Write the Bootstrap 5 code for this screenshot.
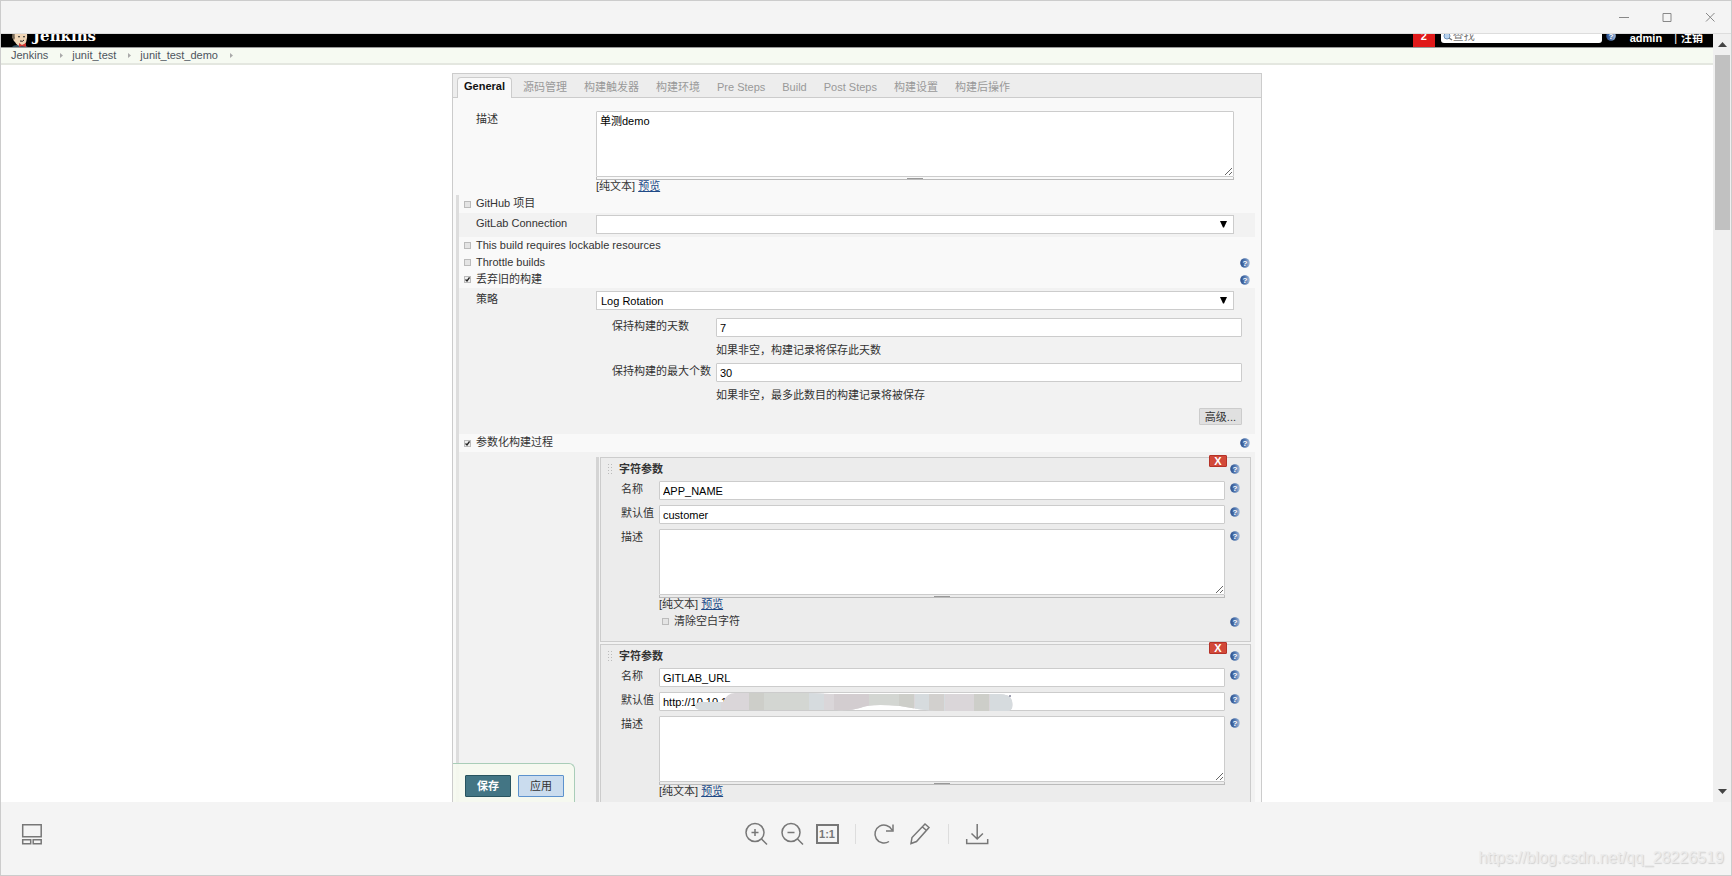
<!DOCTYPE html>
<html lang="zh-CN">
<head>
<meta charset="utf-8">
<meta name="viewport" content="width=device-width, initial-scale=1">
<title>junit_test_demo Config [Jenkins]</title>
<link href="https://cdn.jsdelivr.net/npm/bootstrap@5.3.0/dist/css/bootstrap.min.css" rel="stylesheet">
<style>
  body { font-family: "Liberation Sans", "Noto Sans CJK SC", sans-serif; font-size: 11px; line-height: 16px; color: #333; }
  .viewer { border: 1px solid #ccc; background: #f4f4f4; }
  .title-bar { height: 33px; padding-right: 10px; gap: 21px; border-bottom: 1px solid #ddd; }
  .icon-btn { padding: 0; border: 0; background: none; color: #666; line-height: 0; }
  .title-bar .icon-btn { width: 22px; color: #888; }

  /* Jenkins page header */
  .top-bar { height: 13px; background: #000; color: #fff; }
  .top-row { height: 19px; padding: 0 10px; }
  .logo-text { font: bold 15px/16px "DejaVu Serif", serif; color: #fff; }
  .alert-count { width: 22px; height: 19px; margin-right: 6px; line-height: 16px; background: #e01a1a; font-weight: bold; }
  .search-box { width: 161px; height: 15px; padding: 0 2px 0 12px; border: 0; border-radius: 3px; background: #fff; color: #777; }
  .search-box::placeholder { color: #777; }
  .top-row a { color: #fff; }
  .top-row .user { margin-left: 14px; }
  .crumb-bar { height: 18px; padding: 0 0 2px 10px; background: #f6faf2; border-top: 1px solid #999; border-bottom: 2px solid #e4e7e0; }
  .crumb-bar a { color: #4d545d; }
  .crumb-bar svg { margin: 1px 9px 0 12px; }

  /* Configuration panel */
  .config { width: 100%; max-width: 810px; margin-top: 8px; border: 1px solid #ccc; border-bottom: 0; background: #f9f9f9; }
  .tab-strip { height: 24px; padding: 0 4px; background: #ededed; border-bottom: 1px solid #ccc; }
  .tab-strip .nav-link { padding: 0 8px 1px 9px; line-height: 17px; color: #999; }
  .tab-strip .nav-link.active { margin: 0 2px -1px 0; padding: 0 6px 3px; border: 1px solid #ccc; border-bottom: 0; border-radius: 4px 4px 0 0; background: #f9f9f9; color: #111; font-weight: bold; }
  .label-col { flex: 0 0 120px; }
  .intro { padding: 13px 27px 2px 23px; }
  .section-list { margin: 0 6px 0 3px; border-left: 3px solid #ddd; }
  .check-row { height: 17px; padding: 0 5px; }
  .check-row.tall { height: 18px; }
  .check-row label { margin-left: 5px; padding-bottom: 2px; }
  .band { padding: 2px 0 3px 17px; background: #f2f2f2; }
  .band.deep { padding: 3px 0 9px 17px; }
  .band.fill { padding: 5px 4px 0 0; }
  .field-right { margin-right: 21px; }
  .sub-form { margin: 8px 13px 0 136px; }
  .sub-label { flex: 0 0 104px; }
  .hint { padding: 5px 0; }
  .line { width: 100%; height: 19px; padding: 0 3px; border: 1px solid #ccc; border-radius: 1px; background: #fff; color: #000; }
  .line.pick { display: block; padding: 0 4px; border-radius: 0; appearance: none;
    background: #fff url("data:image/svg+xml,%3Csvg xmlns='http://www.w3.org/2000/svg' width='7' height='7'%3E%3Cpath d='M0 0h7L4 6.500h-1z'/%3E%3C/svg%3E") no-repeat right 6px center; }
  .area { display: block; width: 100%; height: 66px; padding: 1px 3px; border: 1px solid #ccc; border-radius: 1px; background: #fff; color: #000; resize: both; }
  .grip-line { height: 3px; border: solid #bbb; border-width: 0 1px 1px; }
  .grip-line::before { content: ""; display: block; width: 16px; height: 2px; margin: 0 auto; border-bottom: 1px solid #999; }
  .note { line-height: 13px; }
  .note a { color: #204a87; }
  .tick { appearance: none; flex: none; width: 7px; height: 7px; margin: 0; border: 1px solid #bbb; background: #e4e4e4; }
  .tick:checked { background: #eee url("data:image/svg+xml,%3Csvg xmlns='http://www.w3.org/2000/svg' viewBox='0 0 5 5'%3E%3Cpath d='M.5 2.500L2 4L4.500.5' fill='none' stroke='%23222' stroke-width='1.300'/%3E%3C/svg%3E") center/5px; }
  .help { flex: none; width: 10px; height: 10px; padding: 0; border: 0; background: none; line-height: 0; }
  .more-btn { height: 17px; padding: 0 5px; border: 1px solid #ccc; border-radius: 1px; background: #e0e0e0; color: #333; line-height: 14px; }

  /* Build parameters */
  .param-list { margin-left: 137px; padding-left: 1px; border-left: 3px solid #d4d4d4; }
  .param { height: 185px; margin-bottom: 2px; padding: 3px 10px 0 6px; border: 1px solid #ccc; background: #ececec; }
  .grip { width: 7px; height: 12px; margin-right: 5px; background: radial-gradient(circle, #bbb 1px, transparent 1px) 0 0/3px 3px; }
  .param-row { gap: 5px; margin-bottom: 5px; padding-left: 14px; }
  .param-row .param-label { flex: 0 0 38px; margin-right: -5px; }
  .param-row .help { margin-top: 2px; }
  .param-row.trim { margin-top: 2px; }
  .param-row .tick { margin-left: 3px; }
  .remove { position: absolute; top: -3px; right: 23px; width: 18px; height: 12px; padding: 0; border: 1px solid #b53228; border-radius: 1px; background: #d24939; color: #fff; font-weight: bold; line-height: 9px; }
  .mosaic { position: absolute; top: -1px; left: 36px; }

  .save-bar { position: absolute; bottom: 0; left: -1px; gap: 7px; padding: 11px 10px 5px 12px; border: 1px solid #a9cdb8; border-bottom: 0; border-radius: 0 6px 0 0; background: rgba(246, 250, 240, .9); }
  .save-bar button { width: 46px; height: 22px; padding: 0; border: 1px solid #28535f; border-radius: 1px; background: #437584; color: #fff; font-weight: bold; line-height: 18px; }
  .save-bar .apply { border-color: #5c92cd; background: #cadcee; color: #333; font-weight: normal; }

  /* Page scroll bar */
  .scroller { width: 18px; padding: 8px 0 7px; background: #f0f0f0; }
  .thumb { width: 15px; height: 175px; margin-top: 7px; background: #c1c1c1; }

  /* Viewer tool bar */
  .tool-bar { display: grid; grid-template-columns: 1fr auto 1fr; height: 73px; padding: 20px 7px 0; }
  .thumbs { margin-left: 11px; }
  .tools { gap: 12px; height: 24px; }
  .rule { width: 1px; height: 20px; margin: 0 4px; background: #ddd; }
  .actual { width: 23px; height: 20px; border: 2px solid #777; font-weight: bold; font-size: 11px; line-height: 16px; color: #777; }
  .watermark { padding-top: 26px; font-size: 16px; line-height: 20px; color: #ebebeb; text-shadow: 1px 1px 1px #d0d0d0; }
</style>
</head>
<body>
<svg class="position-absolute" width="0" height="0">
  <defs>
    <linearGradient id="ball"><stop offset="0" stop-color="#2d4f8c"/><stop offset=".5" stop-color="#5077b0"/><stop offset="1" stop-color="#a4bddc"/></linearGradient>
    <symbol id="q" viewBox="0 0 10 10"><circle cx="5" cy="5" r="4.800" fill="url(#ball)"/><text x="5" y="8" text-anchor="middle" font-family="Liberation Sans" font-size="8" font-weight="bold" fill="#fff">?</text></symbol>
  </defs>
</svg>
<div class="viewer d-flex flex-column vh-100 overflow-hidden">
  <div class="title-bar d-flex align-items-center justify-content-end flex-shrink-0">
    <button class="icon-btn" aria-label="Minimize"><svg width="12" height="12" stroke="currentColor"><path d="M1 6.500h10"/></svg></button>
    <button class="icon-btn" aria-label="Maximize"><svg width="12" height="12" fill="none" stroke="currentColor"><path d="M2 2.500h8v8H2z"/></svg></button>
    <button class="icon-btn" aria-label="Close"><svg width="12" height="12" stroke="currentColor"><path d="M2 2l8.500 8.500M10.500 2L2 10.500"/></svg></button>
  </div>

  <div class="d-flex flex-fill overflow-hidden bg-white">
    <div class="d-flex flex-column flex-fill overflow-hidden">
      <header class="top-bar d-flex flex-column justify-content-end flex-shrink-0 overflow-hidden">
        <div class="top-row d-flex align-items-center flex-shrink-0">
          <svg width="18" height="22" viewBox="0 0 18 22"><path d="M0 22q1-4 6-4h7q4 1 5 4z" fill="#335061"/><path d="M2 10q0-9 8-9 7 1 6 10-1 8-6 8-4 0-6-4-2-1-2-5z" fill="#f0d6b7"/><path d="M1 11Q1 0 9 1L5 4q-2 3-1 7l-1 2z" fill="#776a5a"/><path d="M7 10q1-1 2 0M12 10q1-1 2 0M9 14q3 1 4-1" fill="none" stroke="#222"/><path d="M8 16l3 2 4-2v4l-4-1-3 1z" fill="#d33833"/></svg>
          <a class="logo-text text-decoration-none ms-1 mb-1" href="#">Jenkins</a>
          <a class="alert-count text-center text-decoration-none ms-auto" href="#">2</a>
          <div class="position-relative mb-1">
            <input class="search-box d-block" type="search" placeholder="查找" aria-label="查找">
            <svg class="position-absolute top-0 start-0" width="13" height="14"><circle cx="6" cy="8" r="3" fill="#b8d3ef" stroke="#6c93bd"/><path d="M8 10l3 2" stroke="#777" stroke-width="1.500"/></svg>
          </div>
          <button class="help ms-1 mb-1" aria-label="Help"><svg width="10" height="10"><use href="#q"/></svg></button>
          <a class="user fw-bold text-decoration-none" href="#">admin</a>
          <span class="ms-2 ps-1">|</span>
          <a class="fw-bold text-decoration-none ms-1" href="#">注销</a>
        </div>
      </header>
      <nav class="crumb-bar d-flex align-items-center flex-shrink-0" aria-label="breadcrumb">
        <a class="text-decoration-none" href="#">Jenkins</a><svg width="3" height="5"><path d="M0 0l3 2.500L0 5z" fill="#aaa"/></svg>
        <a class="text-decoration-none" href="#">junit_test</a><svg width="3" height="5"><path d="M0 0l3 2.500L0 5z" fill="#aaa"/></svg>
        <a class="text-decoration-none" href="#">junit_test_demo</a><svg width="3" height="5"><path d="M0 0l3 2.500L0 5z" fill="#aaa"/></svg>
      </nav>

      <main class="config position-relative d-flex flex-column flex-fill mx-auto overflow-hidden">
        <nav class="tab-strip nav flex-nowrap align-items-end flex-shrink-0">
          <a class="nav-link active" href="#">General</a>
          <a class="nav-link" href="#">源码管理</a>
          <a class="nav-link" href="#">构建触发器</a>
          <a class="nav-link" href="#">构建环境</a>
          <a class="nav-link" href="#">Pre Steps</a>
          <a class="nav-link" href="#">Build</a>
          <a class="nav-link" href="#">Post Steps</a>
          <a class="nav-link" href="#">构建设置</a>
          <a class="nav-link" href="#">构建后操作</a>
        </nav>

        <div class="intro d-flex flex-shrink-0">
          <label class="label-col" for="desc">描述</label>
          <div class="flex-fill">
            <textarea class="area" id="desc">单测demo</textarea>
            <div class="grip-line"></div>
            <div class="note">[纯文本] <a href="#">预览</a></div>
          </div>
        </div>

        <div class="section-list d-flex flex-column flex-fill">
          <div class="check-row tall d-flex align-items-center"><input class="tick" type="checkbox" id="c1"><label for="c1">GitHub 项目</label></div>
          <div class="band d-flex">
            <label class="label-col" for="conn">GitLab Connection</label>
            <div class="flex-fill field-right"><select class="line pick" id="conn"><option></option></select></div>
          </div>
          <div class="check-row d-flex align-items-center"><input class="tick" type="checkbox" id="c2"><label for="c2">This build requires lockable resources</label></div>
          <div class="check-row d-flex align-items-center"><input class="tick" type="checkbox" id="c3"><label for="c3">Throttle builds</label><button class="help ms-auto" aria-label="Help"><svg width="10" height="10"><use href="#q"/></svg></button></div>
          <div class="check-row d-flex align-items-center"><input class="tick" type="checkbox" id="c4" checked><label for="c4">丢弃旧的构建</label><button class="help ms-auto" aria-label="Help"><svg width="10" height="10"><use href="#q"/></svg></button></div>
          <div class="band deep">
            <div class="d-flex">
              <label class="label-col" for="strategy">策略</label>
              <div class="flex-fill field-right"><select class="line pick" id="strategy"><option>Log Rotation</option></select></div>
            </div>
            <div class="sub-form">
              <div class="d-flex">
                <label class="sub-label" for="days">保持构建的天数</label>
                <div class="flex-fill"><input class="line d-block" id="days" value="7"><div class="hint">如果非空，构建记录将保存此天数</div></div>
              </div>
              <div class="d-flex">
                <label class="sub-label" for="count">保持构建的最大个数</label>
                <div class="flex-fill"><input class="line d-block" id="count" value="30"><div class="hint">如果非空，最多此数目的构建记录将被保存</div></div>
              </div>
              <div class="text-end lh-1"><button class="more-btn">高级...</button></div>
            </div>
          </div>
          <div class="check-row tall d-flex align-items-center"><input class="tick" type="checkbox" id="c5" checked><label for="c5">参数化构建过程</label><button class="help ms-auto" aria-label="Help"><svg width="10" height="10"><use href="#q"/></svg></button></div>
          <div class="band fill flex-fill">
            <div class="param-list h-100">
              <section class="param position-relative">
                <button class="remove" aria-label="Remove">X</button>
                <div class="d-flex align-items-center mb-1"><span class="grip"></span><b>字符参数</b><button class="help ms-auto" aria-label="Help"><svg width="10" height="10"><use href="#q"/></svg></button></div>
                <div class="param-row d-flex"><label class="param-label" for="n1">名称</label><div class="flex-fill"><input class="line d-block" id="n1" value="APP_NAME"></div><button class="help" aria-label="Help"><svg width="10" height="10"><use href="#q"/></svg></button></div>
                <div class="param-row d-flex"><label class="param-label" for="v1">默认值</label><div class="flex-fill"><input class="line d-block" id="v1" value="customer"></div><button class="help" aria-label="Help"><svg width="10" height="10"><use href="#q"/></svg></button></div>
                <div class="param-row d-flex mb-0"><label class="param-label" for="d1">描述</label>
                  <div class="flex-fill"><textarea class="area" id="d1"></textarea><div class="grip-line"></div><div class="note">[纯文本] <a href="#">预览</a></div></div>
                  <button class="help" aria-label="Help"><svg width="10" height="10"><use href="#q"/></svg></button></div>
                <div class="param-row trim d-flex align-items-center"><span class="param-label"></span><input class="tick" type="checkbox" id="t1"><label for="t1">清除空白字符</label><button class="help ms-auto" aria-label="Help"><svg width="10" height="10"><use href="#q"/></svg></button></div>
              </section>
              <section class="param position-relative">
                <button class="remove" aria-label="Remove">X</button>
                <div class="d-flex align-items-center mb-1"><span class="grip"></span><b>字符参数</b><button class="help ms-auto" aria-label="Help"><svg width="10" height="10"><use href="#q"/></svg></button></div>
                <div class="param-row d-flex"><label class="param-label" for="n2">名称</label><div class="flex-fill"><input class="line d-block" id="n2" value="GITLAB_URL"></div><button class="help" aria-label="Help"><svg width="10" height="10"><use href="#q"/></svg></button></div>
                <div class="param-row d-flex"><label class="param-label" for="v2">默认值</label>
                  <div class="flex-fill position-relative"><input class="line d-block" id="v2" value="http://10.10.1">
                    <svg class="mosaic" width="320" height="21" viewBox="0 0 320 21">
                      <clipPath id="smear"><path d="M0 15q0-4 8-4h20q4-9 12-9h75l20 1h165q16-1 17 7 2 10-5 10H240q-14-1-35-5-30-3-40 2-10 3-24 2H6q-6-1-6-4z"/></clipPath>
                      <g clip-path="url(#smear)"><path fill="#dad6d9" d="M0 0h320v21H0z"/><path fill="#d6dbde" d="M0 0h26v21H0zM114 0h15v21h-15zM220 0h30v21h-30zM295 0h25v21h-25z"/><path fill="#cdcec9" d="M54 0h15v21H54zM204 0h15v21h-15zM279 0h15v21h-15z"/><path fill="#d3d6d2" d="M69 0h45v21H69zM174 0h30v21h-30z"/><path fill="#d3cdd0" d="M139 0h35v21h-35z"/><path fill="#d2d0ce" d="M234 0h15v21h-15z"/></g>
                      <path d="M315 4v2" stroke="#446"/>
                    </svg>
                  </div><button class="help" aria-label="Help"><svg width="10" height="10"><use href="#q"/></svg></button></div>
                <div class="param-row d-flex mb-0"><label class="param-label" for="d2">描述</label>
                  <div class="flex-fill"><textarea class="area" id="d2"></textarea><div class="grip-line"></div><div class="note">[纯文本] <a href="#">预览</a></div></div>
                  <button class="help" aria-label="Help"><svg width="10" height="10"><use href="#q"/></svg></button></div>
              </section>
            </div>
          </div>
        </div>
        <div class="save-bar d-flex"><button type="submit">保存</button><button class="apply" type="button">应用</button></div>
      </main>
    </div>
    <div class="scroller d-flex flex-column align-items-center flex-shrink-0">
      <svg width="9" height="6"><path d="M0 5l4.500-5L9 5z" fill="#444"/></svg>
      <div class="thumb"></div>
      <svg class="mt-auto" width="9" height="6"><path d="M0 0h9L4.500 5z" fill="#444"/></svg>
    </div>
  </div>

  <footer class="tool-bar flex-shrink-0">
    <div class="thumbs"><button class="icon-btn" aria-label="Thumbnails"><svg width="26" height="24" fill="none" stroke="#777" stroke-width="1.500"><path d="M3.700 2.700h18.500v12H3.700zM3.700 17.700h8v4h-8zM14.200 17.700h8v4h-8z"/></svg></button></div>
    <div class="tools d-flex align-items-center">
      <button class="icon-btn" aria-label="Zoom in"><svg width="24" height="24" fill="none" stroke="#777" stroke-width="1.500"><circle cx="11" cy="10.500" r="9"/><path d="M17.500 17l5.500 5.500M7.500 10.500h7M11 7v7"/></svg></button>
      <button class="icon-btn" aria-label="Zoom out"><svg width="24" height="24" fill="none" stroke="#777" stroke-width="1.500"><circle cx="11" cy="10.500" r="9"/><path d="M17.500 17l5.500 5.500M7.500 10.500h7"/></svg></button>
      <button class="icon-btn actual" aria-label="Actual size">1:1</button>
      <span class="rule"></span>
      <button class="icon-btn" aria-label="Rotate"><svg width="24" height="24" fill="none" stroke="#777" stroke-width="1.500"><path d="M17 19.500A9 9 0 1 1 20 8M21 2.500V9h-7"/></svg></button>
      <button class="icon-btn" aria-label="Edit"><svg width="24" height="24" fill="none" stroke="#777" stroke-width="1.500"><path d="M3 21.500l1-6L17 2l4 3.500L8.500 19.500zM14.500 5l4 3.500"/></svg></button>
      <span class="rule"></span>
      <button class="icon-btn" aria-label="Download"><svg width="24" height="24" fill="none" stroke="#777" stroke-width="1.500"><path d="M1.700 17v4.500h21V17M12.200 2v15M6.500 11.500l5.700 5.500 5.700-5.500"/></svg></button>
    </div>
    <div class="watermark text-end">https://blog.csdn.net/qq_28226519</div>
  </footer>
</div>
<script src="https://cdn.jsdelivr.net/npm/bootstrap@5.3.0/dist/js/bootstrap.bundle.min.js"></script>
</body>
</html>
